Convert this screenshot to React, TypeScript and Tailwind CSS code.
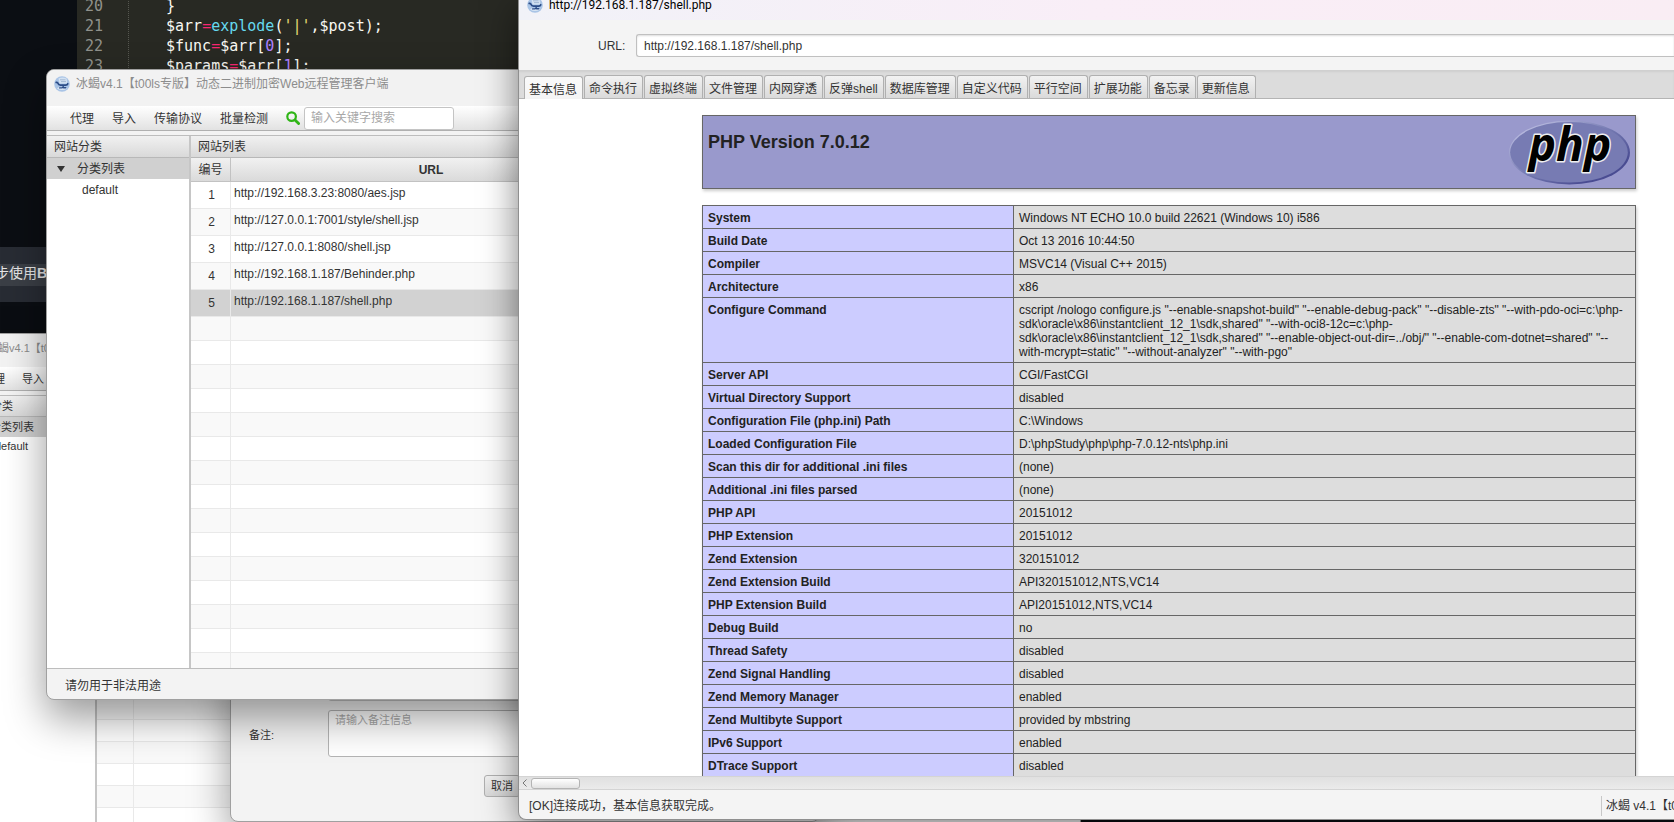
import { useState } from "react";
import clsx from "clsx";

const sites = [
  "http://192.168.3.23:8080/aes.jsp",
  "http://127.0.0.1:7001/style/shell.jsp",
  "http://127.0.0.1:8080/shell.jsp",
  "http://192.168.1.187/Behinder.php",
  "http://192.168.1.187/shell.php",
];

const menus = ["代理", "导入", "传输协议", "批量检测"];

const tabs = [
  "基本信息",
  "命令执行",
  "虚拟终端",
  "文件管理",
  "内网穿透",
  "反弹shell",
  "数据库管理",
  "自定义代码",
  "平行空间",
  "扩展功能",
  "备忘录",
  "更新信息",
];

const info = [
  ["System", "Windows NT ECHO 10.0 build 22621 (Windows 10) i586"],
  ["Build Date", "Oct 13 2016 10:44:50"],
  ["Compiler", "MSVC14 (Visual C++ 2015)"],
  ["Architecture", "x86"],
  [
    "Configure Command",
    'cscript /nologo configure.js "--enable-snapshot-build" "--enable-debug-pack" "--disable-zts" "--with-pdo-oci=c:\\php-sdk\\oracle\\x86\\instantclient_12_1\\sdk,shared" "--with-oci8-12c=c:\\php-sdk\\oracle\\x86\\instantclient_12_1\\sdk,shared" "--enable-object-out-dir=../obj/" "--enable-com-dotnet=shared" "--with-mcrypt=static" "--without-analyzer" "--with-pgo"',
  ],
  ["Server API", "CGI/FastCGI"],
  ["Virtual Directory Support", "disabled"],
  ["Configuration File (php.ini) Path", "C:\\Windows"],
  ["Loaded Configuration File", "D:\\phpStudy\\php\\php-7.0.12-nts\\php.ini"],
  ["Scan this dir for additional .ini files", "(none)"],
  ["Additional .ini files parsed", "(none)"],
  ["PHP API", "20151012"],
  ["PHP Extension", "20151012"],
  ["Zend Extension", "320151012"],
  ["Zend Extension Build", "API320151012,NTS,VC14"],
  ["PHP Extension Build", "API20151012,NTS,VC14"],
  ["Debug Build", "no"],
  ["Thread Safety", "disabled"],
  ["Zend Signal Handling", "disabled"],
  ["Zend Memory Manager", "enabled"],
  ["Zend Multibyte Support", "provided by mbstring"],
  ["IPv6 Support", "enabled"],
  ["DTrace Support", "disabled"],
];

function AppIcon() {
  return (
    <svg viewBox="0 0 16 16" className="size-4 shrink-0" aria-hidden="true">
      <circle cx="8" cy="8" r="7.8" fill="#a9c4e6" />
      <path d="M4.500 2.500q4-2 8 0l1 5h-8z" fill="#d3e1f1" />
      <path d="M6 3.800h5.500M7 5.600h5" stroke="#8fa9c8" strokeWidth=".7" />
      <path d="M3 12.500q5 3 10 0l-2-1.500H5z" fill="#d9e6f4" />
      <g fill="none" stroke="#2c4d88" strokeLinecap="round">
        <path d="M2.200 6.400q1.400-.4 1.900 1.100.4 1.500 2.400 1.600h5.200q1.700 0 2.100-1.400" strokeWidth="1.700" />
        <path d="M9 9.500q.8 1.800-1.200 2.400H5.600M9.500 11.800h2.200" strokeWidth="1.400" />
      </g>
    </svg>
  );
}

function SearchIcon() {
  return (
    <svg viewBox="0 0 14 14" className="size-[14px] shrink-0" fill="none" stroke="#2fb516" aria-hidden="true">
      <circle cx="5.600" cy="5.600" r="4.300" strokeWidth="2.200" />
      <path d="M9 9l3.600 3.600" strokeWidth="2.800" strokeLinecap="round" />
    </svg>
  );
}

function PhpLogo() {
  return (
    <svg viewBox="0 0 121 65" className="h-[65px] w-[121px] shrink-0" role="img" aria-label="PHP logo">
      <defs>
        <linearGradient id="rim" x1="0" y1="0" x2="1" y2="1">
          <stop offset="0.150" stopColor="#b4b6dc" />
          <stop offset="0.500" stopColor="#7378b0" />
          <stop offset="0.800" stopColor="#4a4c92" />
        </linearGradient>
      </defs>
      <ellipse cx="60.500" cy="32.500" rx="60.500" ry="32" fill="url(#rim)" />
      <ellipse cx="60" cy="32.300" rx="58.800" ry="30.300" fill="#777bb3" />
      <text
        x="61"
        y="41"
        textAnchor="middle"
        fontSize="46"
        fontStyle="italic"
        fontWeight="700"
        fontFamily="'Open Sans', 'DejaVu Sans', sans-serif"
        stroke="#eee"
        strokeWidth="3"
        strokeLinejoin="round"
        paintOrder="stroke"
      >
        php
      </text>
    </svg>
  );
}

function Editor() {
  return (
    <pre className="absolute inset-y-0 left-[77px] w-[1004px] overflow-hidden bg-[#282923] font-['DejaVu_Sans_Mono',monospace] text-[15px] leading-5 text-[#f8f8f2]">
      <div className="-mt-1 flex">
        <div className="w-[52px] border-r border-dotted border-[#55564f] pl-2 text-[#90918b]">
          20{"\n"}21{"\n"}22{"\n"}23
        </div>
        <code className="pl-[37px] font-['DejaVu_Sans_Mono',monospace]">
          {"}\n"}
          $arr<span className="text-[#f92672]">=</span>
          <span className="text-[#66d9ef]">explode</span>(
          <span className="text-[#e6db74]">'|'</span>,$post);{"\n"}
          $func<span className="text-[#f92672]">=</span>$arr[
          <span className="text-[#ae81ff]">0</span>];{"\n"}
          $params<span className="text-[#f92672]">=</span>$arr[
          <span className="text-[#ae81ff]">1</span>];
        </code>
      </div>
    </pre>
  );
}

function ManagerWindow({ small = false, className }: { small?: boolean; className: string }) {
  const bar = "bg-linear-to-b from-[#f1f1f1] to-[#d9d9d9]";
  const cell = clsx("border-r border-b border-[#e9e9e9]", small ? "h-[25px]" : "h-[27px]");
  return (
    <section
      className={clsx(
        "absolute flex flex-col overflow-hidden rounded-lg border border-[#a0a0a0] bg-[#f3f3f3] shadow-[0_18px_40px_rgba(0,0,0,0.4)]",
        small ? "text-[11px]" : "text-xs",
        className,
      )}
    >
      <header
        className={clsx(
          "flex shrink-0 items-start bg-[#f2f2f2] pt-[6px] text-[#8c8c8c]",
          small ? "h-[33px] gap-px pl-[7px]" : "h-9 gap-[6px] pl-[7px]",
        )}
      >
        <AppIcon />
        <h2 className="leading-[17px]">冰蝎v4.1【t00ls专版】动态二进制加密Web远程管理客户端</h2>
      </header>
      <nav
        className={clsx(
          "flex shrink-0 items-center border-b border-[#b0b0b0] bg-linear-to-b from-white to-[#e2e2e2]",
          small ? "h-6 gap-[17px] pl-[20px]" : "h-[25px] gap-[18px] pl-[23px]",
        )}
      >
        {menus.map((menu) => (
          <button key={menu} type="button" className="pt-px">
            {menu}
          </button>
        ))}
        <label className="flex items-center gap-1">
          <SearchIcon />
          <input
            aria-label="搜索"
            placeholder="输入关键字搜索"
            className="h-[23px] w-[150px] rounded-[3px] border border-[#c4c4c4] bg-white px-[6px] placeholder:text-[#a8a8a8]"
          />
        </label>
      </nav>
      <div className="mt-1 flex min-h-0 flex-1 border-y border-[#bdbdbd]">
        <aside
          className={clsx(
            "shrink-0 border-r-2 border-[#c6c6c6] bg-white",
            small ? "w-[134px]" : "w-[144px]",
          )}
        >
          <h3
            className={clsx(
              "flex items-center border-b border-[#b8b8b8] pt-px",
              bar,
              small ? "h-[21px] pl-[6px]" : "h-[22px] pl-[7px]",
            )}
          >
            网站分类
          </h3>
          <div className={clsx("flex items-center bg-[#d0d0d0] pt-px", small ? "h-5 gap-2 pl-[11px]" : "h-[21px] gap-3 pl-[10px]")}>
            <svg viewBox="0 0 8 6" className="h-[6px] w-2" aria-hidden="true">
              <path d="M0 0h8L4 6z" fill="#333" />
            </svg>
            分类列表
          </div>
          <p className={small ? "pl-8 leading-[18px]" : "pl-[35px] leading-[22px]"}>default</p>
        </aside>
        <div className="min-w-0 flex-1 overflow-hidden bg-white">
          <h3
            className={clsx(
              "flex items-center border-b border-[#b8b8b8] pt-px pl-[7px]",
              bar,
              small ? "h-[21px]" : "h-[22px]",
            )}
          >
            网站列表
          </h3>
          <table className="w-full table-fixed border-separate border-spacing-0">
            <thead>
              <tr className={bar}>
                <th
                  className={clsx(
                    "h-6 border-r border-b border-[#c2c2c2] p-0 pt-px font-normal",
                    small ? "w-[37px]" : "w-10",
                  )}
                >
                  编号
                </th>
                <th className={clsx("border-r border-b border-[#c2c2c2] p-0 pt-px", small ? "w-[372px]" : "w-[401px]")}>
                  URL
                </th>
                <th className="border-b border-[#c2c2c2] p-0" />
              </tr>
            </thead>
            <tbody>
              {sites.map((site, i) => (
                <tr key={site} className={i === 4 ? "bg-[#d2d2d2]" : i % 2 ? "bg-[#f9f9f9]" : ""}>
                  <td className={clsx(cell, "p-0 pl-[2px] text-center")}>{i + 1}</td>
                  <td className={clsx(cell, "p-0 pb-1 pl-[3px]")}>{site}</td>
                  <td className={cell} />
                </tr>
              ))}
              {Array.from({ length: 15 }, (_, i) => (
                <tr key={i} className={i % 2 ? "" : "bg-[#f9f9f9]"}>
                  <td className={clsx("border-r border-b border-[#e9e9e9]", small ? "h-[22px]" : "h-6")} />
                  <td className="border-r border-b border-[#e9e9e9]" />
                  <td className="border-b border-[#e9e9e9]" />
                </tr>
              ))}
            </tbody>
          </table>
        </div>
      </div>
      <footer className="flex h-[30px] shrink-0 items-center pt-[3px] pl-[18px]">请勿用于非法用途</footer>
    </section>
  );
}

function AddDialog() {
  return (
    <form
      className="absolute bottom-0 left-[230px] flex w-[590px] flex-col gap-[9px] rounded-lg border border-[#a0a0a0] bg-[#f3f3f3] pb-6 text-[11px] shadow-[0_18px_40px_rgba(0,0,0,0.4)]"
      onSubmit={(e) => e.preventDefault()}
    >
      <input aria-label="URL" className="mt-6 ml-[97px] h-6 rounded-[3px] border border-[#c4c4c4] bg-white" />
      <div className="flex items-center">
        <label htmlFor="memo" className="w-[97px] pt-[3px] pl-[18px]">
          备注:
        </label>
        <textarea
          id="memo"
          placeholder="请输入备注信息"
          className="h-[47px] flex-1 resize-none rounded-[3px] border border-[#b4b4b4] bg-white px-[6px] py-px placeholder:text-[#a8a8a8]"
        />
      </div>
      <button
        type="button"
        className="mt-[9px] ml-[253px] h-[22px] w-9 self-start rounded-[3px] border border-[#b0b0b0] bg-linear-to-b from-[#f1f1f1] to-[#d9d9d9]"
      >
        取消
      </button>
    </form>
  );
}

function ShellWindow() {
  const [active, setActive] = useState(tabs[0]);
  const [url, setUrl] = useState("http://192.168.1.187/shell.php");
  return (
    <section className="absolute top-0 right-0 bottom-[2px] left-[518px] flex flex-col overflow-hidden rounded-bl-lg border-b border-l border-[#8f8f8f] bg-[#f4f4f4] text-xs shadow-[0_10px_36px_rgba(0,0,0,0.5)]">
      <header className="flex h-5 shrink-0 items-start bg-linear-to-r from-[#f1f2f8] via-[#f9eef7] via-50% to-[#f9edf4] pl-2 text-black">
        <div className="-mt-[3px] flex items-center gap-[6px] font-['Roboto','Liberation_Sans',sans-serif]">
          <AppIcon />
          <h1 className="leading-4">{url}</h1>
        </div>
      </header>
      <div className="flex h-[50px] shrink-0 items-center pl-[79px]">
        <label htmlFor="url" className="w-[38px] pt-px">
          URL:
        </label>
        <input
          id="url"
          value={url}
          onChange={(e) => setUrl(e.target.value)}
          className="h-[23px] flex-1 rounded-l-[3px] border border-r-0 border-[#c0c0c0] bg-white px-[7px] pt-px shadow-[inset_0_1px_2px_#ddd]"
        />
      </div>
      <div
        role="tablist"
        className="flex h-[29px] shrink-0 items-end gap-px border-b border-[#b4b4b4] bg-[#dcdcdc] pl-[5px] shadow-[inset_0_2px_2px_#cfcfcf]"
      >
        {tabs.map((tab) => (
          <button
            key={tab}
            type="button"
            role="tab"
            aria-selected={tab === active}
            onClick={() => setActive(tab)}
            className={clsx(
              "h-[23px] rounded-t-[3px] border border-b-0 border-[#b0b0b0] pt-[3px] pr-[5px] pl-1 whitespace-nowrap",
              tab === active
                ? "-mb-px h-6 bg-linear-to-b from-[#fafafa] to-[#f4f4f4]"
                : "bg-linear-to-b from-[#f2f2f2] to-[#dadada]",
            )}
          >
            {tab}
          </button>
        ))}
      </div>
      <main className="min-h-0 flex-1 overflow-hidden bg-white pt-4 pr-[38px] pl-[183px] font-['Liberation_Sans',Arial,sans-serif] text-[#222]">
        <div className="flex h-[74px] items-start justify-between border border-[#666] bg-[#9999cc] px-[5px] pt-1 shadow-[1px_2px_3px_#ccc]">
          <h2 className="pt-[11px] text-[18px] leading-[22px] font-bold">PHP Version 7.0.12</h2>
          <PhpLogo />
        </div>
        <table className="mt-4 w-full border-collapse leading-[14px] shadow-[1px_2px_3px_#ccc]">
          <tbody>
            {info.map(([name, value]) => (
              <tr key={name}>
                <th
                  scope="row"
                  className="w-1/3 border border-[#666] bg-[#ccccff] px-[5px] pt-[5px] pb-[3px] text-left align-top font-bold"
                >
                  {name}
                </th>
                <td className="border border-[#666] bg-[#ddd] px-[5px] pt-[5px] pb-[3px]">{value}</td>
              </tr>
            ))}
          </tbody>
        </table>
      </main>
      <div className="flex h-[14px] shrink-0 items-center gap-1 border-y border-[#d4d4d4] bg-linear-to-b from-[#e0e0e0] to-[#ebebeb] pl-[3px]">
        <svg viewBox="0 0 5 8" className="h-2 w-[5px]" fill="none" stroke="#777" aria-hidden="true">
          <path d="M4.500.5L1 4l3.500 3.500" />
        </svg>
        <div className="h-[11px] w-[49px] rounded-[3px] border border-[#b4b4b4] bg-linear-to-b from-white to-[#e2e2e2]" />
      </div>
      <footer className="flex h-[29px] shrink-0 items-center justify-between overflow-hidden pt-[3px] pl-[10px]">
        <p>[OK]连接成功，基本信息获取完成。</p>
        <p className="w-[73px] overflow-hidden border-l border-[#c8c8c8] pl-1 leading-5 whitespace-nowrap">
          冰蝎 v4.1【t00ls专版】
        </p>
      </footer>
    </section>
  );
}

export default function App() {
  return (
    <div className="relative h-screen w-full overflow-hidden bg-[#0b0e13] font-['Liberation_Sans','Noto_Sans_CJK_SC',sans-serif] text-[#333]">
      <div className="absolute top-[247px] left-0 flex h-[55px] w-[77px] items-center overflow-hidden bg-[#282c34] text-sm text-[#e6e6e6]">
        <p className="-ml-[5px] h-[22px] bg-[#3b3f46] leading-[18px] whitespace-nowrap">
          步使用<b>Behinder</b>
        </p>
      </div>
      <Editor />
      <ManagerWindow small className="top-[333px] -bottom-8 -left-[38px] w-[1119px]" />
      <AddDialog />
      <ManagerWindow className="top-[69px] left-[46px] h-[631px] w-[1210px]" />
      <ShellWindow />
    </div>
  );
}
